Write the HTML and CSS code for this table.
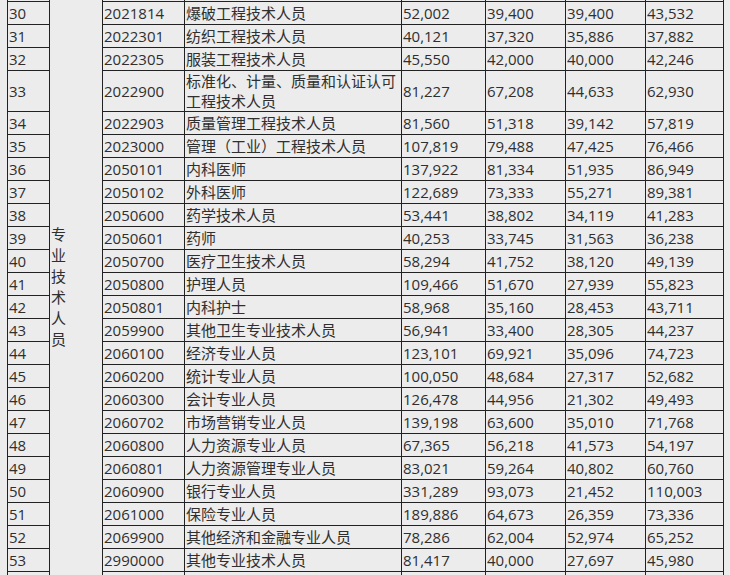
FILE: index.html
```html
<!DOCTYPE html>
<html lang="zh-CN">
<head>
<meta charset="utf-8">
<title>专业技术人员工资表</title>
<link rel="stylesheet" href="styles.css">
</head>
<body>
<div class="page">
<table class="sheet">
<colgroup>
<col class="c-no"><col class="c-cat"><col class="c-code"><col class="c-name"><col class="c-v1"><col class="c-v2"><col class="c-v3"><col class="c-v4">
</colgroup>
<tbody>
<tr><td></td><td class="cat" rowspan="26"><span class="vert">专业技术人员</span></td><td></td><td></td><td></td><td></td><td></td><td></td></tr>
<tr><td>30</td><td>2021814</td><td>爆破工程技术人员</td><td>52,002</td><td>39,400</td><td>39,400</td><td>43,532</td></tr>
<tr><td>31</td><td>2022301</td><td>纺织工程技术人员</td><td>40,121</td><td>37,320</td><td>35,886</td><td>37,882</td></tr>
<tr><td>32</td><td>2022305</td><td>服装工程技术人员</td><td>45,550</td><td>42,000</td><td>40,000</td><td>42,246</td></tr>
<tr class="tall"><td>33</td><td>2022900</td><td>标准化、计量、质量和认证认可工程技术人员</td><td>81,227</td><td>67,208</td><td>44,633</td><td>62,930</td></tr>
<tr><td>34</td><td>2022903</td><td>质量管理工程技术人员</td><td>81,560</td><td>51,318</td><td>39,142</td><td>57,819</td></tr>
<tr><td>35</td><td>2023000</td><td>管理（工业）工程技术人员</td><td>107,819</td><td>79,488</td><td>47,425</td><td>76,466</td></tr>
<tr><td>36</td><td>2050101</td><td>内科医师</td><td>137,922</td><td>81,334</td><td>51,935</td><td>86,949</td></tr>
<tr><td>37</td><td>2050102</td><td>外科医师</td><td>122,689</td><td>73,333</td><td>55,271</td><td>89,381</td></tr>
<tr><td>38</td><td>2050600</td><td>药学技术人员</td><td>53,441</td><td>38,802</td><td>34,119</td><td>41,283</td></tr>
<tr><td>39</td><td>2050601</td><td>药师</td><td>40,253</td><td>33,745</td><td>31,563</td><td>36,238</td></tr>
<tr><td>40</td><td>2050700</td><td>医疗卫生技术人员</td><td>58,294</td><td>41,752</td><td>38,120</td><td>49,139</td></tr>
<tr><td>41</td><td>2050800</td><td>护理人员</td><td>109,466</td><td>51,670</td><td>27,939</td><td>55,823</td></tr>
<tr><td>42</td><td>2050801</td><td>内科护士</td><td>58,968</td><td>35,160</td><td>28,453</td><td>43,711</td></tr>
<tr><td>43</td><td>2059900</td><td>其他卫生专业技术人员</td><td>56,941</td><td>33,400</td><td>28,305</td><td>44,237</td></tr>
<tr><td>44</td><td>2060100</td><td>经济专业人员</td><td>123,101</td><td>69,921</td><td>35,096</td><td>74,723</td></tr>
<tr><td>45</td><td>2060200</td><td>统计专业人员</td><td>100,050</td><td>48,684</td><td>27,317</td><td>52,682</td></tr>
<tr><td>46</td><td>2060300</td><td>会计专业人员</td><td>126,478</td><td>44,956</td><td>21,302</td><td>49,493</td></tr>
<tr><td>47</td><td>2060702</td><td>市场营销专业人员</td><td>139,198</td><td>63,600</td><td>35,010</td><td>71,768</td></tr>
<tr><td>48</td><td>2060800</td><td>人力资源专业人员</td><td>67,365</td><td>56,218</td><td>41,573</td><td>54,197</td></tr>
<tr><td>49</td><td>2060801</td><td>人力资源管理专业人员</td><td>83,021</td><td>59,264</td><td>40,802</td><td>60,760</td></tr>
<tr><td>50</td><td>2060900</td><td>银行专业人员</td><td>331,289</td><td>93,073</td><td>21,452</td><td>110,003</td></tr>
<tr><td>51</td><td>2061000</td><td>保险专业人员</td><td>189,886</td><td>64,673</td><td>26,359</td><td>73,336</td></tr>
<tr><td>52</td><td>2069900</td><td>其他经济和金融专业人员</td><td>78,286</td><td>62,004</td><td>52,974</td><td>65,252</td></tr>
<tr><td>53</td><td>2990000</td><td>其他专业技术人员</td><td>81,417</td><td>40,000</td><td>27,697</td><td>45,980</td></tr>
<tr><td></td><td></td><td></td><td></td><td></td><td></td><td></td></tr>
</tbody>
</table>
</div>
</body>
</html>
```

FILE: styles.css
```css
html, body {
  margin: 0;
  padding: 0;
  background: #ececec;
}

body {
  font-family: "Open Sans", "Noto Sans CJK SC", sans-serif;
  font-size: 15px;
  color: #2f2f2f;
  overflow: hidden;
}

.page {
  padding-left: 7px;
  margin-top: -22px;
}

.sheet {
  border-collapse: collapse;
  table-layout: fixed;
  width: 717px;
}

.c-no { width: 42px; }
.c-cat { width: 53px; }
.c-code { width: 82px; }
.c-name { width: 217px; }
.c-v1 { width: 84px; }
.c-v2 { width: 80px; }
.c-v3 { width: 80px; }
.c-v4 { width: 78px; }

.sheet tr {
  height: 23px;
}

.sheet tr.tall {
  height: 41px;
}

.sheet td {
  border: 1px solid #222;
  padding: 0 0 0 1px;
  line-height: 20px;
  vertical-align: middle;
  white-space: normal;
  overflow: hidden;
}

.sheet td.cat {
  vertical-align: middle;
}

.vert {
  display: block;
  width: 15px;
  line-height: 21px;
}
```
